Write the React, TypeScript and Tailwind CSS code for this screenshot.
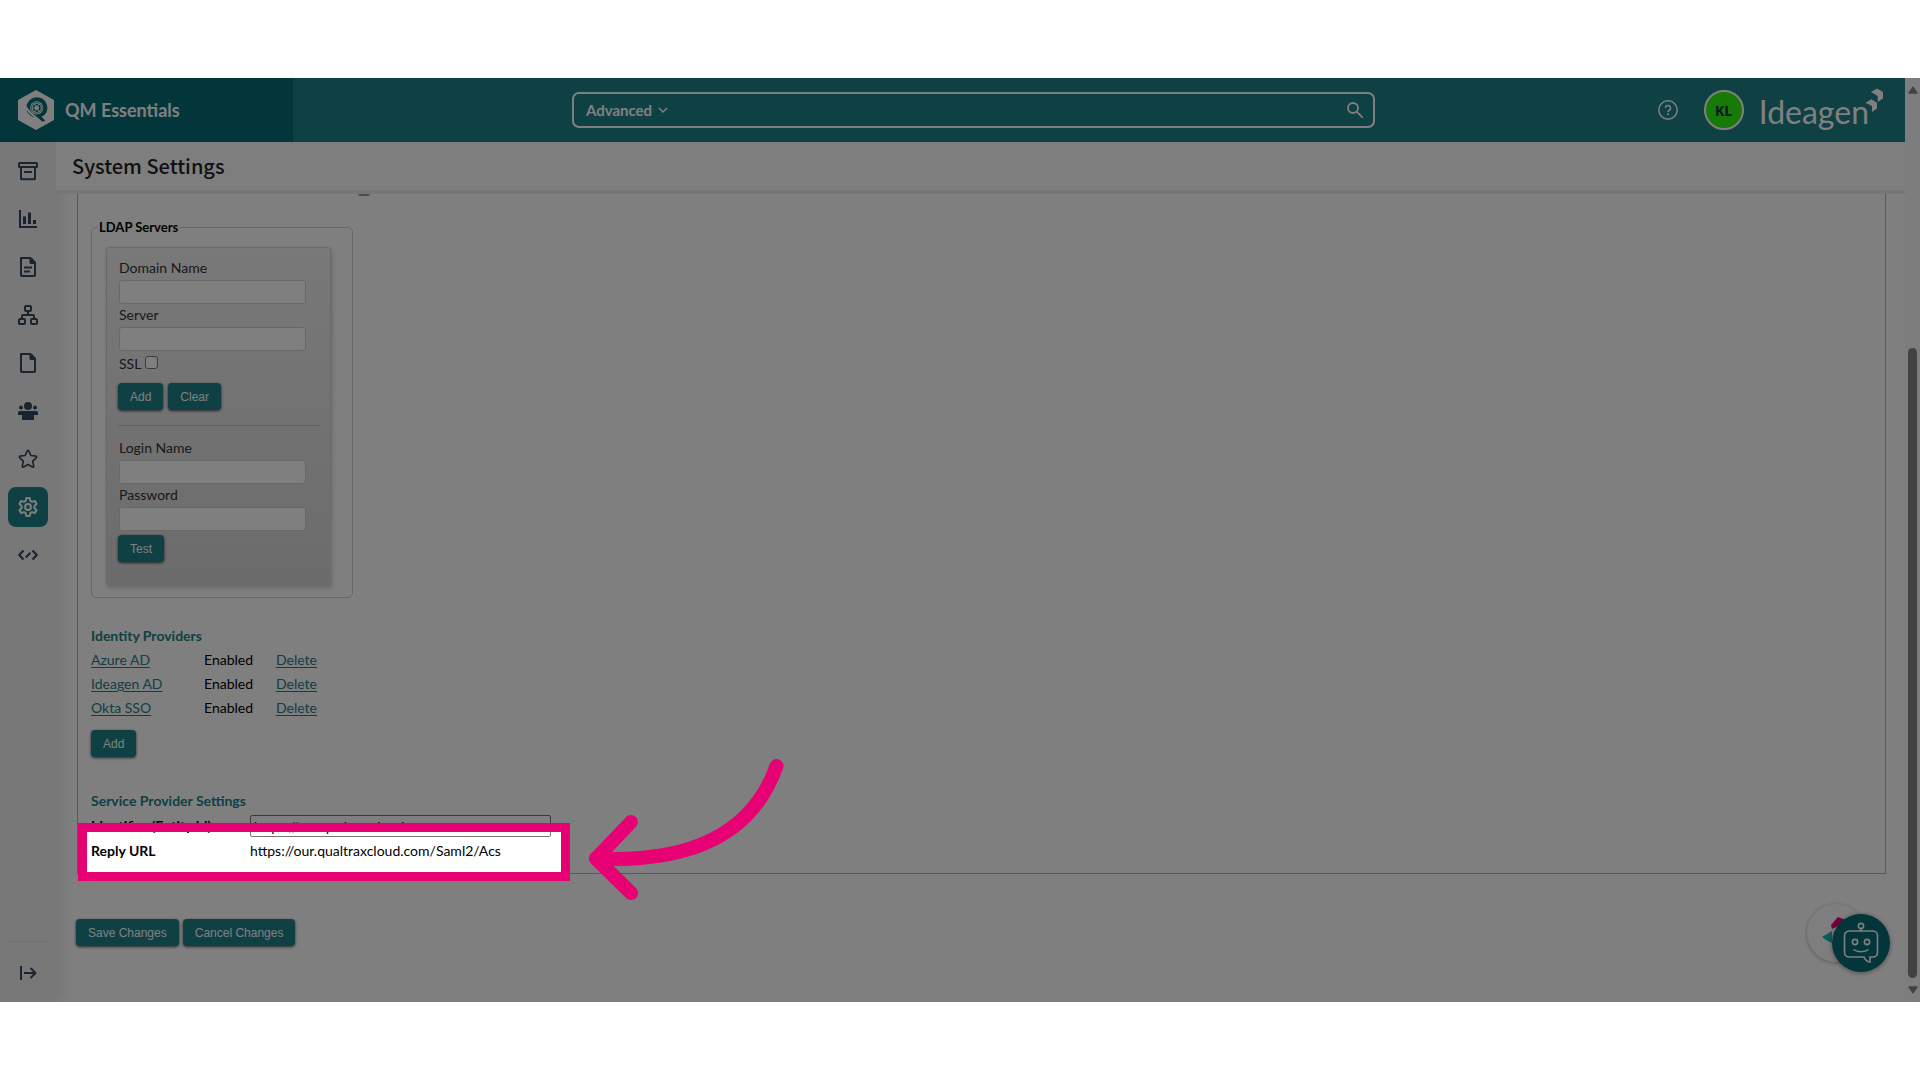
import React from "react";

const BTN =
  "h-[27px] rounded-[4px] bg-[#1e8088] px-3 font-['Liberation_Sans',sans-serif] text-[12px] leading-4 text-white shadow-[0_1px_3px_rgba(0,0,0,0.7)]";
const FIELD =
  "mb-px mt-0.5 block h-6 w-[187px] rounded-[3px] border border-[#d0d0d0] bg-white px-1 text-[13px]";
const LABEL = "block text-[14px] leading-5 text-[#333]";
const LINK = "text-[#1e8088] underline underline-offset-2";
const HEADING = "text-[14px] font-bold leading-5 text-[#1e8088]";

function Svg({ children }: { children: React.ReactNode }) {
  return (
    <svg
      viewBox="0 0 20 20"
      className="size-5"
      fill="none"
      stroke="currentColor"
      strokeWidth="2"
      strokeLinejoin="round"
      aria-hidden="true"
    >
      {children}
    </svg>
  );
}

const NAV: { name: string; active?: boolean; icon: React.ReactNode }[] = [
  {
    name: "Archive",
    icon: (
      <Svg>
        <rect x="1" y="2" width="18" height="4" rx="0.5" />
        <path d="M3 6v11.5a.8.8 0 0 0 .8.8h12.400a.8.8 0 0 0 .8-.8V6M6 11h8" />
      </Svg>
    ),
  },
  {
    name: "Reports",
    icon: (
      <Svg>
        <path d="M2 1v17h17" strokeLinejoin="miter" />
        <path d="M6.500 7.500v7.500M11.500 3.500v11.500M16.500 11v4" strokeWidth="3" />
      </Svg>
    ),
  },
  {
    name: "Documents",
    icon: (
      <Svg>
        <path d="M3 1h9.500L17 5.500V18a1 1 0 0 1-1 1H4a1 1 0 0 1-1-1z" />
        <path d="M12 1v5.500h5.500z" fill="currentColor" strokeWidth="1" />
        <path d="M6 10.500h8M6 14.500h6" />
      </Svg>
    ),
  },
  {
    name: "Workflows",
    icon: (
      <Svg>
        <rect x="7" y="1" width="6" height="5" rx="1" />
        <rect x="1" y="14" width="6" height="5" rx="1" />
        <rect x="13" y="14" width="6" height="5" rx="1" />
        <path d="M10 6v4M4 14v-3a1 1 0 0 1 1-1h10a1 1 0 0 1 1 1v3" />
      </Svg>
    ),
  },
  {
    name: "Files",
    icon: (
      <Svg>
        <path d="M3 1h9.500L17 5.500V18a1 1 0 0 1-1 1H4a1 1 0 0 1-1-1z" />
        <path d="M12 1v5.500h5.500z" fill="currentColor" strokeWidth="1" />
      </Svg>
    ),
  },
  {
    name: "People",
    icon: (
      <Svg>
        <g fill="currentColor" stroke="none">
          <circle cx="10" cy="5" r="4" />
          <circle cx="3" cy="6.500" r="2" />
          <circle cx="17" cy="6.500" r="2" />
          <path d="M0 14v-2.500a1.500 1.500 0 0 1 1.500-1.500h17a1.500 1.500 0 0 1 1.500 1.500V14h-4v5H4v-5z" />
        </g>
      </Svg>
    ),
  },
  {
    name: "Favourites",
    icon: (
      <Svg>
        <path
          strokeWidth="1.700"
          d="M9.200 1.900a.9.9 0 0 1 1.600 0l2.100 4.600 5 .6a.9.9 0 0 1 .5 1.500l-3.700 3.500 1 5.100a.9.9 0 0 1-1.300.9L10 15.600l-4.400 2.500a.9.9 0 0 1-1.300-.9l1-5.100-3.700-3.500a.9.9 0 0 1 .5-1.500l5-.6z"
        />
      </Svg>
    ),
  },
  {
    name: "Settings",
    active: true,
    icon: (
      <Svg>
        <path d="M8.300 1h3.400l.6 2.900 1.700 1 2.900-.9 1.700 2.900-2.200 2.100v2l2.200 2.100-1.700 2.900-2.900-.9-1.700 1-.6 2.900H8.300l-.6-2.900-1.700-1-2.900.9-1.700-2.900L3.600 11V9L1.400 6.900 3.100 4l2.900.9 1.700-1z" />
        <circle cx="10" cy="10" r="2.900" />
      </Svg>
    ),
  },
  {
    name: "Developer",
    icon: (
      <Svg>
        <path d="M5.500 5.500 1.200 10l4.300 4.500M14.500 5.500l4.300 4.500-4.300 4.500M7.800 12.500l4.600-4.800" />
      </Svg>
    ),
  },
];

function Header() {
  return (
    <header className="flex h-16 bg-[#1e8088] text-white">
      <div className="flex w-[293px] items-center gap-[11px] bg-[#066c76] pl-[18px]">
        <svg viewBox="0 0 36 40" className="h-10 w-9" aria-hidden="true">
          <path d="M18 0l18 10v20L18 40 0 30V10z" fill="#fff" />
          <path
            d="M18.700 7.300a10.500 10.500 0 0 1 7.500 17.900l-2.700 1.300 4 4.500-3.800.5-4-3.800c-6 .5-11-4-11.500-9.900a10.500 10.500 0 0 1 10.500-10.500z"
            fill="#066c76"
          />
          <circle cx="18.700" cy="17.800" r="6.600" fill="#fff" />
          <g fill="none" stroke="#066c76">
            <circle cx="18.700" cy="17.800" r="5.400" strokeWidth="0.700" />
            <circle cx="18.700" cy="17.800" r="3.200" strokeWidth="1.800" strokeDasharray="2.600 0.750" />
          </g>
          <path d="M7.500 17l5 6 10 8.500" stroke="#fff" strokeWidth="2.200" fill="none" />
        </svg>
        <span className="text-[18px] font-bold leading-6">QM Essentials</span>
      </div>
      <div className="flex flex-1 items-center justify-center">
        <form className="flex h-9 w-[59%] items-center rounded-[7px] border-2 border-white pl-3">
          <button type="button" className="flex items-center gap-1.5 text-[15px] font-bold leading-5">
            Advanced
            <svg viewBox="0 0 10 6" className="h-1.5 w-2.5" fill="none" stroke="currentColor" strokeWidth="1.500">
              <path d="M1 1l4 4 4-4" />
            </svg>
          </button>
          <input aria-label="Search" className="min-w-0 flex-1 bg-transparent outline-none" />
          <button type="button" aria-label="Run search" className="mr-2.5">
            <svg viewBox="0 0 16 16" className="size-4" fill="none" stroke="currentColor" strokeWidth="1.800">
              <circle cx="6" cy="6" r="5" />
              <path d="M9.700 9.700l6 6" />
            </svg>
          </button>
        </form>
      </div>
      <div className="flex items-center pl-1 pr-[22px]">
        <button type="button" aria-label="Help">
          <svg viewBox="0 0 20 20" className="size-5" fill="none" stroke="currentColor">
            <circle cx="10" cy="10" r="9.200" strokeWidth="1.500" />
            <path d="M7.500 8a2.500 2.500 0 1 1 3.700 2.200c-.8.5-1.200.9-1.200 1.800" strokeWidth="1.600" />
            <path d="M10 13.300v1.700" strokeWidth="1.800" />
          </svg>
        </button>
        <button
          type="button"
          className="ml-[26px] size-10 rounded-full border-2 border-white bg-[#2ef20c] font-['Open_Sans',sans-serif] text-[14px] font-bold text-[#16324a]"
        >
          KL
        </button>
        <div className="ml-[15px] flex items-start">
          <span className="pt-1 text-[32px] leading-10">Ideagen</span>
          <svg viewBox="0 0 18 24" className="-ml-1 h-6 w-[18px]" fill="#fff" aria-hidden="true">
            <path d="M6 4l6-3.500L18 4v6.500L12.700 14V8z" />
            <path d="M.5 14.800L6.500 11.300l5.500 3.500V20.500L7 24v-6z" />
          </svg>
        </div>
      </div>
    </header>
  );
}

function Sidebar() {
  return (
    <nav
      aria-label="Main"
      className="flex w-14 flex-col items-center bg-[#f1f1f1] shadow-[4px_0_18px_rgba(0,0,0,0.1)]"
    >
      <div className="mt-[9px] flex flex-col gap-2">
        {NAV.map((n) => (
          <a
            key={n.name}
            href="#"
            aria-label={n.name}
            className={
              n.active
                ? "flex size-10 items-center justify-center rounded-lg bg-[#1e8088] text-white"
                : "flex size-10 items-center justify-center text-[#34495e]"
            }
          >
            {n.icon}
          </a>
        ))}
      </div>
      <div className="mb-[19px] mt-auto flex w-10 justify-center border-t border-[#ddd] pt-[21px] text-[#34495e]">
        <button type="button" aria-label="Expand menu">
          <Svg>
            <path d="M3 3v14M6 10h11M12.500 5l5 5-5 5" />
          </Svg>
        </button>
      </div>
    </nav>
  );
}

function LdapServers() {
  return (
    <fieldset className="w-[262px] rounded-[5px] border border-[#cfcfcf] pb-[11px] pl-[14px]">
      <legend className="-ml-[9px] px-0.5 text-[13px] font-bold leading-4 text-black">LDAP Servers</legend>
      <div className="mt-3 w-[225px] rounded-[3px] border border-[#d4d4d4] bg-linear-to-b from-[#f2f2f2] to-[#d8d8d8] pb-[23px] pl-3 pt-2.5 shadow-[1px_2px_5px_rgba(0,0,0,0.2)]">
        <label htmlFor="domain" className={LABEL}>
          Domain Name
        </label>
        <input id="domain" className={FIELD} />
        <label htmlFor="server" className={LABEL}>
          Server
        </label>
        <input id="server" className={FIELD} />
        <div className="flex h-6 items-center gap-1">
          <label htmlFor="ssl" className={LABEL}>
            SSL
          </label>
          <input
            id="ssl"
            type="checkbox"
            className="mb-1 size-[13px] appearance-none rounded-[3px] border border-[#767676] bg-white"
          />
        </div>
        <div className="-ml-px mt-[7px] flex gap-[5px]">
          <button type="button" className={BTN}>
            Add
          </button>
          <button type="button" className={BTN}>
            Clear
          </button>
        </div>
        <hr className="-ml-px mb-3 mr-2.5 mt-[15px] border-t border-[#c4c4c4]" />
        <label htmlFor="login" className={LABEL}>
          Login Name
        </label>
        <input id="login" className={FIELD} />
        <label htmlFor="password" className={LABEL}>
          Password
        </label>
        <input id="password" type="password" className={FIELD} />
        <div className="-ml-px mt-1 flex">
          <button type="button" className={BTN}>
            Test
          </button>
        </div>
      </div>
    </fieldset>
  );
}

function IdentityProviders() {
  return (
    <section className="mt-7">
      <h2 className={HEADING}>Identity Providers</h2>
      <table className="mt-0.5 text-left text-[14px] leading-6 text-black">
        <tbody>
          {["Azure AD", "Ideagen AD", "Okta SSO"].map((p) => (
            <tr key={p}>
              <td className="w-[113px] p-0">
                <a href="#" className={LINK}>
                  {p}
                </a>
              </td>
              <td className="w-[72px] p-0">Enabled</td>
              <td className="p-0">
                <a href="#" className={LINK}>
                  Delete
                </a>
              </td>
            </tr>
          ))}
        </tbody>
      </table>
      <div className="mt-2.5 flex">
        <button type="button" className={BTN}>
          Add
        </button>
      </div>
    </section>
  );
}

function Spotlight() {
  return (
    <div className="pointer-events-none absolute -left-[13px] -top-[15px] z-50 h-[58px] w-[492px] border-[9px] border-[#e60073] shadow-[0_0_0_3000px_rgba(0,0,0,0.5)]">
      <svg
        viewBox="580 750 220 160"
        className="absolute left-[493px] top-[-82px] h-[160px] w-[220px]"
        fill="none"
        stroke="#e60073"
        strokeWidth="14"
        strokeLinecap="round"
        strokeLinejoin="round"
        aria-hidden="true"
      >
        <path d="M776.500 766C752 836 688 863 596 858.500" />
        <path d="M631 822l-35 36.500 35 34.500" />
      </svg>
    </div>
  );
}

function ServiceProvider() {
  return (
    <section className="mt-[34px]">
      <h2 className={HEADING}>Service Provider Settings</h2>
      <div className="mt-1 flex items-center text-[14px] text-black">
        <label htmlFor="entity" className="w-[159px] font-bold leading-5">
          Identifier (Entity Id)
        </label>
        <input
          id="entity"
          defaultValue="https://our.qualtraxcloud.com"
          className="h-[22px] w-[301px] rounded-[2px] border border-[#767676] bg-white px-[3px]"
        />
      </div>
      <div className="relative mt-px flex h-6 items-center text-[14px] text-black">
        <span className="w-[159px] font-bold">Reply URL</span>
        <span>https://our.qualtraxcloud.com/Saml2/Acs</span>
        <Spotlight />
      </div>
    </section>
  );
}

function ChatBot() {
  return (
    <div className="absolute bottom-[30px] right-[15px] h-[68px] w-[83px]">
      <div className="absolute left-0 top-0 size-[58px] rounded-full bg-[#fcfcfc] shadow-[0_1px_4px_rgba(0,0,0,0.3)]">
        <svg viewBox="0 0 58 58" className="size-[58px]" aria-hidden="true">
          <path d="M24 21l7-8 8 3v10l-8-4-6 3z" fill="#e6007a" />
          <path d="M15 33l10-6v12l-6-3z" fill="#1bb5bd" />
        </svg>
      </div>
      <button
        type="button"
        aria-label="Open chat"
        className="absolute bottom-0 right-0 flex size-[58px] items-center justify-center rounded-full bg-[#066c76] shadow-[0_1px_5px_rgba(0,0,0,0.4)]"
      >
        <svg viewBox="0 0 36 42" className="h-[42px] w-9" fill="none" stroke="#fff" strokeWidth="1.600">
          <circle cx="18" cy="4" r="2.600" />
          <path d="M18 6.500V10M6 9h24a4.500 4.500 0 0 1 4.500 4.500v17A4.500 4.500 0 0 1 30 35h-3v5c-3-.5-5-2-6-5H6a4.500 4.500 0 0 1-4.500-4.500v-17A4.500 4.500 0 0 1 6 9z" />
          <circle cx="12" cy="20" r="2.600" />
          <circle cx="24" cy="20" r="2.600" />
          <path d="M10.500 27.500c3.500 3 11.500 3 15 0" />
        </svg>
      </button>
    </div>
  );
}

function Scrollbar() {
  return (
    <div className="flex w-[15px] flex-col items-center bg-[#fbfbfb] py-2" aria-hidden="true">
      <svg viewBox="0 0 10 8" className="h-2 w-2.5" fill="#858585">
        <path d="M5 0l4.500 6.500a1 1 0 0 1-.8 1.300H1.300a1 1 0 0 1-.8-1.300z" />
      </svg>
      <div className="mb-2 mt-[254px] w-[9px] flex-1 rounded-full bg-[#858585]" />
      <svg viewBox="0 0 10 8" className="h-2 w-2.5" fill="#858585">
        <path d="M5 8L.5 1.500A1 1 0 0 1 1.300.2h7.400a1 1 0 0 1 .8 1.300z" />
      </svg>
    </div>
  );
}

export default function App() {
  return (
    <div className="flex min-h-screen flex-col bg-white py-[78px] font-[Lato,sans-serif]">
      <div className="relative flex flex-1 overflow-hidden bg-white">
        <div className="relative flex min-w-0 flex-1 flex-col">
          <Header />
          <div className="flex flex-1">
            <Sidebar />
            <main className="min-w-0 flex-1">
              <div className="flex h-[52px] items-center border-b-4 border-[#ececec] bg-[#fdfdfd] pl-4">
                <h1 className="font-['Noto_Sans_CJK_SC',sans-serif] text-[20px] font-medium leading-8 text-[#222]">
                  System Settings
                </h1>
              </div>
              <div className="pl-5 pr-[19px]">
                <div className="ml-px border-x border-b border-[#a9b4b5] pb-[11px] pl-[13px]">
                  <div className="h-[25px] pl-[267px]">
                    <div className="h-0.5 w-3 rounded-b-sm bg-[#999]" />
                  </div>
                  <LdapServers />
                  <IdentityProviders />
                  <ServiceProvider />
                </div>
                <div className="mt-[45px] flex gap-1">
                  <button type="button" className={BTN}>
                    Save Changes
                  </button>
                  <button type="button" className={BTN}>
                    Cancel Changes
                  </button>
                </div>
              </div>
            </main>
          </div>
          <ChatBot />
        </div>
        <Scrollbar />
      </div>
    </div>
  );
}
